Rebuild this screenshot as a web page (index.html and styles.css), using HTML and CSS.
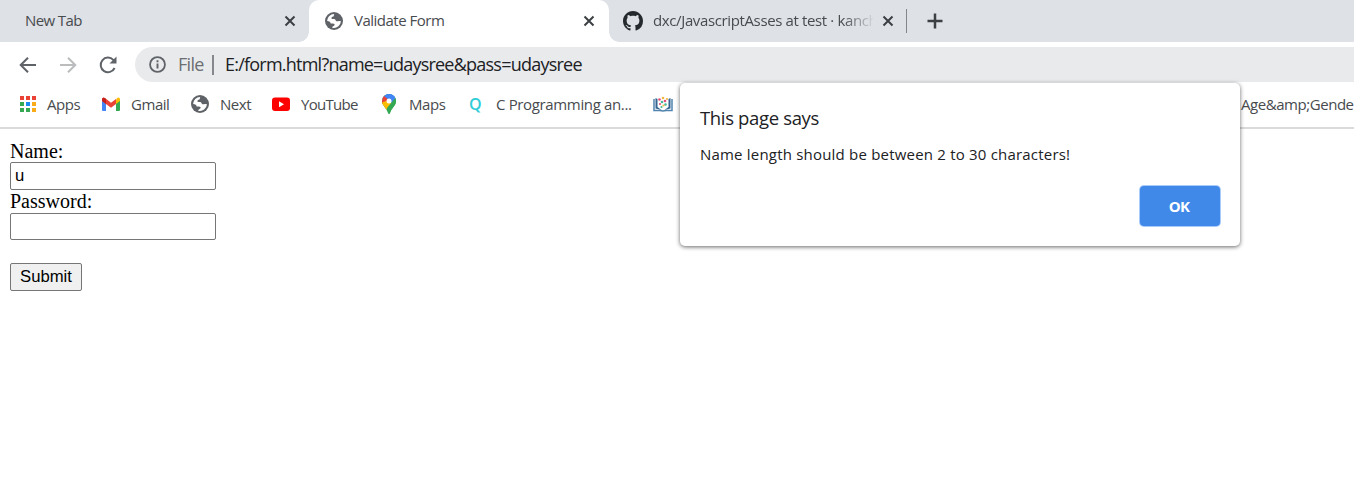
FILE: index.html
```html
<!DOCTYPE html>
<html lang="en">
<head>
<meta charset="utf-8">
<title>Validate Form</title>
<link rel="stylesheet" href="styles.css">
</head>
<body>
<svg class="defs" width="0" height="0">
  <symbol id="globe" viewBox="0 0 18 18">
    <circle cx="9" cy="9" r="9" fill="#5f6368"/>
    <path d="M9.4 2.1C8.4 2.4 9.5 4 8.3 4.6 7.2 5.200 6.400 5 6.500 6.200 6.600 7.300 8.200 6.900 9.400 7 10.700 7.200 10.300 9 11.500 9.200 12.700 9.400 13.600 8.600 15.900 9.200A7 7 0 0 1 7.200 15.700C7 14.700 8.600 14.300 9.300 13.500 10.200 12.400 9.200 11.500 7.900 11.500H5.700C5.500 10 4.500 9.300 2.100 9A7 7 0 0 1 9.400 2.100Z" fill="#fff"/>
    <path d="M11.500 2.600C14 3.600 15.500 5.600 15.900 7.900L12.500 7.600C12.300 6 10.700 6.400 10.300 5.200 10 4.200 11.700 3.900 11.500 2.600Z" fill="#5f6368"/>
  </symbol>
  <symbol id="close" viewBox="0 0 12 12"><path d="M1.500 1.500l9 9M10.500 1.500l-9 9" stroke="#3c4043" stroke-width="2"/></symbol>
</svg>

<header class="browser">
  <div class="tabs">
    <div class="tab tab-first"><span class="label t-new">New Tab</span><svg class="x"><use href="#close"/></svg></div>
    <div class="tab active"><svg class="favicon"><use href="#globe"/></svg><span class="label t-form">Validate Form</span><svg class="x"><use href="#close"/></svg></div>
    <div class="tab tab-github">
      <svg class="octo" viewBox="0 0 16 16"><path fill="#24292e" d="M8 0C3.580 0 0 3.580 0 8c0 3.540 2.290 6.530 5.470 7.590.4.07.55-.17.55-.38 0-.19-.01-.82-.01-1.490-2.010.37-2.530-.49-2.690-.94-.09-.23-.48-.94-.82-1.130-.28-.15-.68-.52-.01-.53.63-.01 1.080.58 1.230.82.72 1.210 1.870.87 2.330.66.07-.52.28-.87.51-1.070-1.780-.2-3.640-.89-3.640-3.950 0-.87.31-1.590.82-2.150-.08-.2-.36-1.020.08-2.120 0 0 .67-.21 2.200.82.64-.18 1.320-.27 2-.27s1.360.09 2 .27c1.530-1.040 2.200-.82 2.200-.82.44 1.100.16 1.920.08 2.120.51.56.82 1.270.82 2.150 0 3.070-1.870 3.750-3.650 3.950.29.25.54.73.54 1.480 0 1.070-.01 1.930-.01 2.200 0 .21.15.46.55.38A8.010 8.010 0 0 0 16 8c0-4.420-3.580-8-8-8z"/></svg>
      <span class="label t-git">dxc/JavascriptAsses at test · kanch</span><svg class="x"><use href="#close"/></svg>
    </div>
    <svg class="plus" viewBox="0 0 16 16"><path d="M8 .5v15M.5 8h15" stroke="#3c4043" stroke-width="2.500"/></svg>
  </div>

  <div class="toolbar">
    <svg class="nav" viewBox="0 0 20 20"><path d="M18 10H3M10 2.700L2.700 10l7.300 7.300" fill="none" stroke="#5f6368" stroke-width="2"/></svg>
    <svg class="nav" viewBox="0 0 20 20"><path d="M2 10h15M10 2.700l7.300 7.300-7.300 7.300" fill="none" stroke="#babcbe" stroke-width="2"/></svg>
    <svg class="nav" viewBox="0 0 20 20"><path d="M16.600 13A7.300 7.300 0 1 1 15.300 4.900L17 6.800" fill="none" stroke="#5f6368" stroke-width="2"/><path d="M18.500 1.500v7h-7z" fill="#5f6368"/></svg>
    <div class="omnibox">
      <svg class="info" viewBox="0 0 16 16"><circle cx="8" cy="8" r="7" fill="none" stroke="#5f6368" stroke-width="1.700"/><path d="M8 7v4.700M8 4v1.800" stroke="#5f6368" stroke-width="1.800"/></svg>
      <span class="scheme">File</span><span class="rule"></span><span class="url">E:/form.html?name=udaysree&amp;pass=udaysree</span>
    </div>
  </div>

  <nav class="bookmarks">
    <div class="mark m-apps">
      <svg viewBox="0 0 18 18"><path fill="#ea4335" d="M1 1h4v4H1zM7 1h4v4H7zM13 1h4v4h-4z"/><path fill="#34a853" d="M1 7h4v4H1zM1 13h4v4H1zM7 13h4v4H7z"/><path fill="#1a8cf0" d="M7 7h4v4H7z"/><path fill="#f9ab19" d="M13 7h4v4h-4zM13 13h4v4h-4z"/></svg><span>Apps</span></div>
    <div class="mark m-gmail">
      <svg viewBox="0 0 18 18"><path d="M0 5v10q0 1 1 1h3V7z" fill="#4285f4"/><path d="M18 5v10q0 1-1 1h-3V7z" fill="#34a853"/><path d="M14 5v4l4-3V4q-.5-2.500-3-1z" fill="#fbbc04"/><path d="M0 4v2l9 6.700L14 9V4L9 7.700 3 3.100Q.5 2 0 4z" fill="#ea4335"/><path d="M0 4v2l4 3V4Q1 1 0 4z" fill="#c5221f"/></svg><span>Gmail</span></div>
    <div class="mark m-next"><svg><use href="#globe"/></svg><span>Next</span></div>
    <div class="mark m-tube"><svg viewBox="0 0 18 18"><rect y="2.500" width="18" height="13.500" rx="3" fill="#f00"/><path d="M7 6.300v6l5-3z" fill="#fff"/></svg><span>YouTube</span></div>
    <div class="mark m-maps">
      <svg class="pin" viewBox="0 0 16 20"><clipPath id="pin"><path d="M8 0a7 7 0 0 1 7 7c0 5-4.500 6.500-6 12.100-.3 1.200-1.700 1.200-2 0C5.500 13.500 1 12 1 7a7 7 0 0 1 7-7z"/></clipPath><g clip-path="url(#pin)"><path d="M0 0h16v20H0z" fill="#34a853"/><path d="M0 3.500L4 7l4 2 4-4 4-2V0H0z" fill="#4285f4"/><path d="M0 2l3-1 5 4-5 6-3-2z" fill="#ea4335"/><path d="M0 9l5-2 6 2-7 8z" fill="#fbbc04"/><path d="M7 0L3 2l5 4 3 3L16 4V0z" fill="#4285f4"/><path d="M15 3l-9 11 2 6 8-7z" fill="#34a853"/></g><circle cx="8" cy="7" r="2.500" fill="#fff"/></svg><span>Maps</span></div>
    <div class="mark m-c"><b>Q</b><span>C Programming an...</span></div>
    <div class="mark m-book">
      <svg viewBox="0 0 20 18"><path d="M1 4v11.500h6L10 16l3-.5h6V4" fill="none" stroke="#5084ae" stroke-width="1.500"/><path d="M2.500 3l2 1v8l4 3-6-1.500zM17.500 3l-2 1v8l-4 3 6-1.500z" fill="#35658f"/><g fill="#e8517a"><circle cx="6.500" cy="4.500" r="1.300"/><circle cx="12" cy="6" r="1.300"/><circle cx="7" cy="9" r="1.100"/></g><g fill="#44b99a"><circle cx="9" cy="7" r="1.300"/><circle cx="12.500" cy="9.500" r="1.300"/><circle cx="8.500" cy="12" r="1.100"/></g><g fill="#f3b643"><circle cx="10" cy="3" r="1.300"/><circle cx="14" cy="4" r="1.100"/><circle cx="10.500" cy="10.500" r="1.100"/></g></svg></div>
    <div class="mark m-age"><span>Age&amp;amp;Gende</span></div>
  </nav>
</header>

<form class="page">
  <label for="name">Name:</label>
  <input id="name" type="text" value="u">
  <label for="pass">Password:</label>
  <input id="pass" class="short" type="password">
  <button type="button" class="submit">Submit</button>
</form>

<section class="dialog" role="alertdialog">
  <h1>This page says</h1>
  <p>Name length should be between 2 to 30 characters!</p>
  <button type="button" class="ok">OK</button>
</section>
</body>
</html>
```
FILE: styles.css
```css
* { box-sizing: border-box; }
body { margin: 0; height: 499px; overflow: hidden; background: #fff; font-family: "Open Sans", "Noto Sans", sans-serif; color: #484b4e; }
.defs { position: absolute; }
svg { display: block; flex: none; }
span { white-space: nowrap; }

.tabs { display: flex; height: 42px; background: #dee1e6; font-size: 15px; }
.tab { display: flex; align-items: center; height: 42px; flex: none; }
.tab-first { width: 309px; padding-left: 25px; }
.label { flex: none; line-height: 24px; margin-top: -2px; }
.t-new { width: 259px; letter-spacing: -.6px; }
.t-form { width: 229px; letter-spacing: -.5px; }
.t-git { width: 220px; letter-spacing: -.37px; margin-right: 9px; -webkit-mask-image: linear-gradient(90deg, #000 190px, transparent 222px); mask-image: linear-gradient(90deg, #000 190px, transparent 222px); }
.x { width: 12px; height: 12px; }
.active { position: relative; width: 300px; padding-left: 16px; background: #fff; border-radius: 10px 10px 0 0; }
.active::before, .active::after { content: ""; position: absolute; bottom: 0; width: 10px; height: 10px; }
.active::before { left: -10px; background: radial-gradient(circle at 0 0, transparent 9.500px, #fff 10px); }
.active::after { right: -10px; background: radial-gradient(circle at 100% 0, transparent 9.500px, #fff 10px); }
.favicon { width: 18px; height: 18px; margin-right: 11px; }
.tab-github { width: 298px; height: 24px; margin-top: 9px; padding-left: 14px; border-right: 1px solid #80868b; }
.octo { width: 20px; height: 20px; margin-right: 10px; }
.plus { width: 16px; height: 16px; margin: 13px 0 0 20px; }

.toolbar { display: flex; align-items: center; height: 45px; padding: 0 0 0 18px; gap: 20px; }
.nav { width: 20px; height: 20px; }
.omnibox { display: flex; align-items: center; flex: 1; height: 35px; margin-left: -3px; padding-left: 14px; background: #e9eaec; border-radius: 18px 0 0 18px; font-size: 18px; }
.info { width: 17px; height: 17px; }
.scheme { width: 34px; margin: -2px 0 0 12px; color: #6b6f73; letter-spacing: -.7px; }
.rule { width: 2px; height: 20px; background: #85898d; }
.url { margin: -2px 0 0 11px; color: #202124; letter-spacing: -.77px; }

.bookmarks { display: flex; align-items: center; height: 42px; padding: 0 0 6px 19px; border-bottom: 2px solid #dadada; font-size: 15px; overflow: hidden; }
.mark { display: flex; align-items: center; flex: none; gap: 11px; letter-spacing: -.45px; }
.mark span { margin-top: -1px; }
.mark svg { width: 18px; height: 18px; }
.mark .pin { width: 16px; height: 20px; }
.m-apps { width: 83px; gap: 10px; }
.m-gmail { width: 89px; }
.m-next { width: 81px; }
.m-tube { width: 109px; letter-spacing: -.7px; }
.m-maps { width: 88px; gap: 12px; }
.m-c { width: 184px; letter-spacing: -.35px; }
.m-c b { width: 16px; font-size: 16px; font-weight: 600; color: #32ccd8; }
.m-book { width: 588px; }
.mark.m-book svg { width: 20px; }

.page { display: flex; flex-direction: column; align-items: flex-start; padding: 11px 10px; font-family: "Liberation Serif", serif; font-size: 20px; line-height: 23px; color: #000; }
.page input { width: 206px; height: 28px; padding: 1px 4px; border: 1px solid #767676; border-radius: 2px; background: #fff; font: 16.700px "Liberation Sans", sans-serif; }
.page input.short { height: 27px; }
.page label { height: 23px; }
.page label:first-child { height: 22px; }
.submit { width: 72px; height: 28px; margin-top: 23px; padding: 0; border: 1px solid #767676; border-radius: 2px; background: #f0f0f0; color: #000; font: 16.700px "Liberation Sans", sans-serif; }

.dialog { position: absolute; left: 680px; top: 83px; width: 560px; height: 163px; padding: 22px 20px; background: #fff; border-radius: 5px; box-shadow: 0 1px 4px rgba(0,0,0,.6); color: #202124; }
.dialog h1 { margin: 0; font-size: 18.500px; font-weight: 400; line-height: 26px; letter-spacing: -.35px; }
.dialog p { margin: 11px 0 20px; font-size: 15px; line-height: 24px; letter-spacing: .2px; white-space: nowrap; }
.ok { display: block; width: 80px; height: 40px; margin-left: auto; padding: 0 2px 0 0; border: 0; border-radius: 4px; background: #4189e9; box-shadow: 0 0 0 1px #a9cbfa; color: #fff; font: 700 15px "Open Sans", sans-serif; letter-spacing: -.6px; }
```
